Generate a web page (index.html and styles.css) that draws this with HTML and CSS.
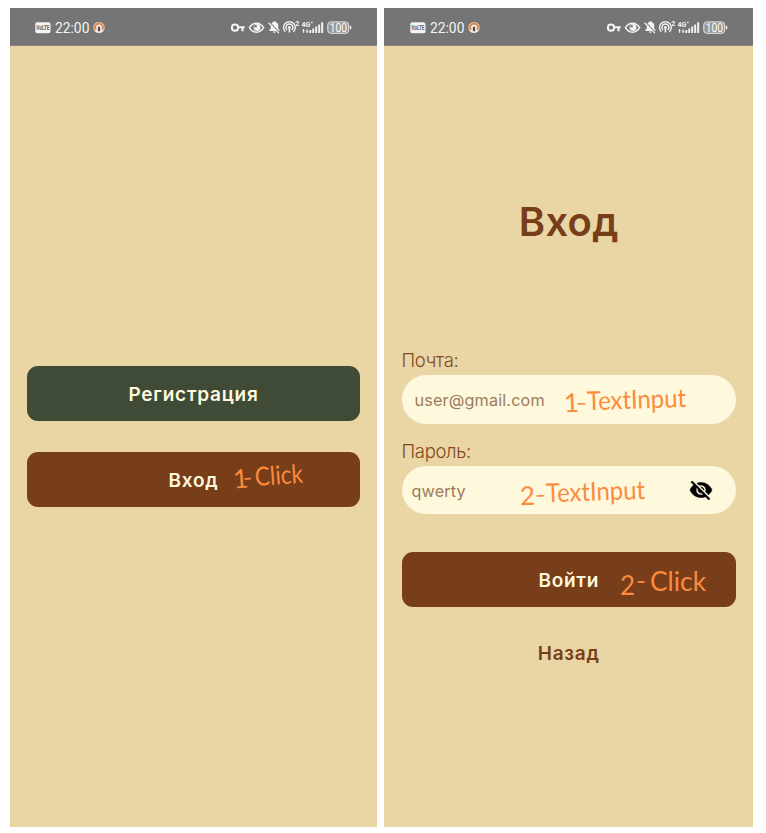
FILE: index.html
```
<!DOCTYPE html>
<html lang="ru">
<head>
<meta charset="utf-8">
<title>Вход</title>
<link rel="stylesheet" href="styles.css">
</head>
<body>
<main class="board">
  <section class="screen start">
    <header class="status">
      <svg class="status-left" viewBox="0 0 70 20">
        <rect x="0.3" y="4.2" width="15.2" height="11" rx="2" fill="#f4f4f4"/>
        <text x="1.3" y="12" class="volte" textLength="13.2" lengthAdjust="spacingAndGlyphs">VoLTE</text>
        <text x="20" y="15" class="time" textLength="34.4" lengthAdjust="spacingAndGlyphs">22:00</text>
        <circle cx="64" cy="9.5" r="5.6" fill="#f3eae4"/>
        <path d="M60.9 11.8a3.9 3.9 0 1 1 6.2 0" fill="none" stroke="#dc8b4c" stroke-width="2"/>
        <path d="M64 8.8v4.4" stroke="#4b4658" stroke-width="2.2"/>
      </svg>
      <svg class="status-right" viewBox="0 0 124 20">
        <g fill="none" stroke="#f4f4f4">
          <circle cx="5" cy="9.7" r="3.1" stroke-width="2"/>
          <path d="M8 9.2h6.7M12.5 9.2v4" stroke-width="2.1"/>
          <path d="M19.4 9.7c3.6-6 10.6-6 14.2 0-3.6 6-10.6 6-14.2 0z" stroke-width="1.5"/>
          <path d="M55.5 14a5.9 5.9 0 1 1 7.8 0M57 12a3.5 3.5 0 1 1 4.8 0" stroke-width="1.4"/>
          <path d="M59.4 9.5v5" stroke-width="1.6"/>
        </g>
        <circle cx="27" cy="9.5" r="3.4" fill="#f4f4f4"/>
        <circle cx="25.6" cy="8.2" r="1.3" fill="#757575"/>
        <path d="M39.4 13v-1l1.4-1.4V7.7c0-1.9 1-3.3 2.8-3.7.1-1.2 1.7-1.2 1.8 0 1.8.4 2.8 1.8 2.8 3.7v2.9l1.3 1.4v1zM43.2 13.6h2.6c0 1.8-2.6 1.8-2.6 0z" fill="#f4f4f4"/>
        <path d="M39.5 4.5l10.4 10.4" stroke="#757575" stroke-width="1.3"/>
        <path d="M38.5 4.8l10.4 10.3" stroke="#f4f4f4" stroke-width="1.3"/>
        <circle cx="59.4" cy="9.5" r="1.4" fill="#f4f4f4"/>
        <text x="65.3" y="8.4" class="tiny">2</text>
        <text x="71.6" y="9" class="tiny">4G</text>
        <path d="M80.8 4.5h2M81.8 3.5v2" stroke="#f4f4f4" stroke-width=".7"/>
        <path d="M73.5 11.2v3.6M72.3 12.2h2.4M77 11.2v3.6M75.8 13.8h2.4" stroke="#f4f4f4" stroke-width="1"/>
        <path d="M80.3 15v-3M83.2 15v-4.5M86.2 15V8.4M89.2 15V6.4M92.2 15V4.2" stroke="#f4f4f4" stroke-width="1.9"/>
        <rect x="97.8" y="3.9" width="20.8" height="11.4" rx="3" fill="#979797" stroke="#e7e7e7"/>
        <path d="M120.5 7.8v3.6" stroke="#e7e7e7" stroke-width="1.6"/>
        <text x="99.7" y="13.9" class="battery" textLength="17.2" lengthAdjust="spacingAndGlyphs">100</text>
      </svg>
    </header>
    <div class="actions">
      <button class="btn green">Регистрация</button>
      <button class="btn brown">Вход
        <svg class="note click-1" viewBox="0 0 76 32"><g transform="rotate(-4 38 16)"><text x="1" y="25" textLength="8">1</text><text x="11" y="24" textLength="9" lengthAdjust="spacingAndGlyphs">–</text><text x="23" y="24" textLength="48" lengthAdjust="spacingAndGlyphs">Click</text></g></svg>
      </button>
    </div>
  </section>

  <section class="screen login">
    <header class="status">
      <svg class="status-left" viewBox="0 0 70 20">
        <rect x="0.3" y="4.2" width="15.2" height="11" rx="2" fill="#f4f4f4"/>
        <text x="1.3" y="12" class="volte" textLength="13.2" lengthAdjust="spacingAndGlyphs">VoLTE</text>
        <text x="20" y="15" class="time" textLength="34.4" lengthAdjust="spacingAndGlyphs">22:00</text>
        <circle cx="64" cy="9.5" r="5.6" fill="#f3eae4"/>
        <path d="M60.9 11.8a3.9 3.9 0 1 1 6.2 0" fill="none" stroke="#dc8b4c" stroke-width="2"/>
        <path d="M64 8.8v4.4" stroke="#4b4658" stroke-width="2.2"/>
      </svg>
      <svg class="status-right" viewBox="0 0 124 20">
        <g fill="none" stroke="#f4f4f4">
          <circle cx="5" cy="9.7" r="3.1" stroke-width="2"/>
          <path d="M8 9.2h6.7M12.5 9.2v4" stroke-width="2.1"/>
          <path d="M19.4 9.7c3.6-6 10.6-6 14.2 0-3.6 6-10.6 6-14.2 0z" stroke-width="1.5"/>
          <path d="M55.5 14a5.9 5.9 0 1 1 7.8 0M57 12a3.5 3.5 0 1 1 4.8 0" stroke-width="1.4"/>
          <path d="M59.4 9.5v5" stroke-width="1.6"/>
        </g>
        <circle cx="27" cy="9.5" r="3.4" fill="#f4f4f4"/>
        <circle cx="25.6" cy="8.2" r="1.3" fill="#757575"/>
        <path d="M39.4 13v-1l1.4-1.4V7.7c0-1.9 1-3.3 2.8-3.7.1-1.2 1.7-1.2 1.8 0 1.8.4 2.8 1.8 2.8 3.7v2.9l1.3 1.4v1zM43.2 13.6h2.6c0 1.8-2.6 1.8-2.6 0z" fill="#f4f4f4"/>
        <path d="M39.5 4.5l10.4 10.4" stroke="#757575" stroke-width="1.3"/>
        <path d="M38.5 4.8l10.4 10.3" stroke="#f4f4f4" stroke-width="1.3"/>
        <circle cx="59.4" cy="9.5" r="1.4" fill="#f4f4f4"/>
        <text x="65.3" y="8.4" class="tiny">2</text>
        <text x="71.6" y="9" class="tiny">4G</text>
        <path d="M80.8 4.5h2M81.8 3.5v2" stroke="#f4f4f4" stroke-width=".7"/>
        <path d="M73.5 11.2v3.6M72.3 12.2h2.4M77 11.2v3.6M75.8 13.8h2.4" stroke="#f4f4f4" stroke-width="1"/>
        <path d="M80.3 15v-3M83.2 15v-4.5M86.2 15V8.4M89.2 15V6.4M92.2 15V4.2" stroke="#f4f4f4" stroke-width="1.9"/>
        <rect x="97.8" y="3.9" width="20.8" height="11.4" rx="3" fill="#979797" stroke="#e7e7e7"/>
        <path d="M120.5 7.8v3.6" stroke="#e7e7e7" stroke-width="1.6"/>
        <text x="99.7" y="13.9" class="battery" textLength="17.2" lengthAdjust="spacingAndGlyphs">100</text>
      </svg>
    </header>
    <div class="form">
      <h1>Вход</h1>
      <label>Почта:</label>
      <div class="field mail"><span>user@gmail.com</span>
        <svg class="note input-1" viewBox="0 0 126 40"><g transform="rotate(-2 63 20)"><text x="1" y="28" textLength="9">1</text><text x="13" y="28" textLength="11" lengthAdjust="spacingAndGlyphs">–</text><text x="24" y="27" textLength="99" lengthAdjust="spacingAndGlyphs">TextInput</text></g></svg>
      </div>
      <label class="second">Пароль:</label>
      <div class="field password"><span>qwerty</span>
        <svg class="note input-2" viewBox="0 0 130 44"><g transform="rotate(-2 65 22)"><text x="1" y="31" textLength="11">2</text><text x="16" y="30" textLength="11" lengthAdjust="spacingAndGlyphs">–</text><text x="27" y="29" textLength="99" lengthAdjust="spacingAndGlyphs">TextInput</text></g></svg>
        <svg class="eye" viewBox="0 0 24 24"><path d="M12 7c2.76 0 5 2.24 5 5 0 .65-.13 1.26-.36 1.83l2.92 2.92c1.51-1.26 2.7-2.89 3.43-4.75-1.73-4.39-6-7.5-11-7.5-1.4 0-2.74.25-3.98.7l2.16 2.16C10.74 7.13 11.35 7 12 7zM2 4.27l2.28 2.28.46.46C3.08 8.3 1.78 10.02 1 12c1.73 4.39 6 7.5 11 7.5 1.55 0 3.03-.3 4.38-.84l.42.42L19.73 22 21 20.73 3.27 3 2 4.27zM7.53 9.8l1.55 1.55c-.05.21-.08.43-.08.65 0 1.66 1.34 3 3 3 .22 0 .44-.03.65-.08l1.55 1.55c-.67.33-1.41.53-2.2.53-2.76 0-5-2.24-5-5 0-.79.2-1.53.53-2.2zm4.31-.78l3.15 3.15.02-.16c0-1.66-1.34-3-3-3l-.17.01z" stroke="#000" stroke-width=".6"/></svg>
      </div>
      <button class="btn brown submit">Войти
        <svg class="note click-2" viewBox="0 0 92 36"><text x="1" y="30" textLength="13">2</text><text x="17" y="25" textLength="10" lengthAdjust="spacingAndGlyphs">–</text><text x="31" y="26" textLength="56" lengthAdjust="spacingAndGlyphs">Click</text></svg>
      </button>
      <a class="back">Назад</a>
    </div>
  </section>
</main>
</body>
</html>
```
FILE: styles.css
```
* { box-sizing: border-box; }
body { margin: 0; background: #fff; font-family: Inter, "Noto Sans", sans-serif; }
.board { display: flex; gap: 7px; padding: 8px 13px 6px 10px; width: 766px; height: 833px; }
.screen { background: #e9d6a4; height: 819px; }
.start { width: 367px; }
.login { width: 369px; }

.status { display: flex; justify-content: space-between; height: 38px; padding: 10px 23px 0 25px; background: #757575; border-bottom: 1px solid #8d8778; }
.login .status { padding-left: 26px; }
.status-left { width: 70px; height: 20px; }
.status-right { width: 124px; height: 20px; }
.volte { font: 700 6.5px Roboto, sans-serif; fill: #606060; }
.time { font: 400 14.5px Roboto, sans-serif; fill: #f4f4f4; }
.tiny { font: 700 7px Roboto, sans-serif; fill: #f4f4f4; }
.battery { font: 400 12px Roboto, sans-serif; fill: #fff; }

.actions { display: flex; flex-direction: column; gap: 31px; padding: 320px 17px 0; }
.btn { position: relative; display: flex; align-items: center; justify-content: center; width: 100%; height: 55px; padding: 2px 0 0; border: 0; border-radius: 11px; color: #fef8dc; font: 600 19px Inter, sans-serif; letter-spacing: .75px; }
.green { background: #404b37; }
.brown { background: #783d19; }

.form { display: flex; flex-direction: column; padding: 0 17px 0 17.5px; }
h1 { margin: 152px 0 0; height: 48px; line-height: 48px; text-align: center; font-size: 40px; font-weight: 600; letter-spacing: .3px; color: #783d19; }
label { margin-top: 102.5px; height: 26.5px; line-height: 23px; font-size: 18.5px; font-weight: 300; letter-spacing: -.35px; color: #84491f; }
label.second { margin-top: 15px; height: 27px; line-height: 24px; }
.field { position: relative; display: flex; align-items: center; height: 48.5px; padding: 1px 13px 0; border-radius: 25px; background: #fef8dc; color: #9c7b5e; font-size: 16.2px; letter-spacing: .15px; }
.password { padding-left: 10px; padding-top: 3px; }
.submit { margin-top: 37.5px; padding-top: 3px; }
.back { margin-top: 35px; height: 24px; line-height: 24px; text-align: center; font-size: 19px; font-weight: 600; letter-spacing: .8px; color: #783d19; }
.eye { position: absolute; left: 287.5px; top: 12.5px; width: 24px; height: 24px; }

.note { position: absolute; overflow: visible; }
.note text { font: 400 26px Lato, sans-serif; letter-spacing: 0; fill: #fb8b3d; }
.click-1 { left: 205px; top: 9px; width: 76px; height: 32px; }
.input-1 { left: 161px; top: 7px; width: 126px; height: 40px; }
.input-2 { left: 117px; top: 6px; width: 130px; height: 44px; }
.click-2 { left: 217px; top: 13px; width: 92px; height: 36px; }
```
